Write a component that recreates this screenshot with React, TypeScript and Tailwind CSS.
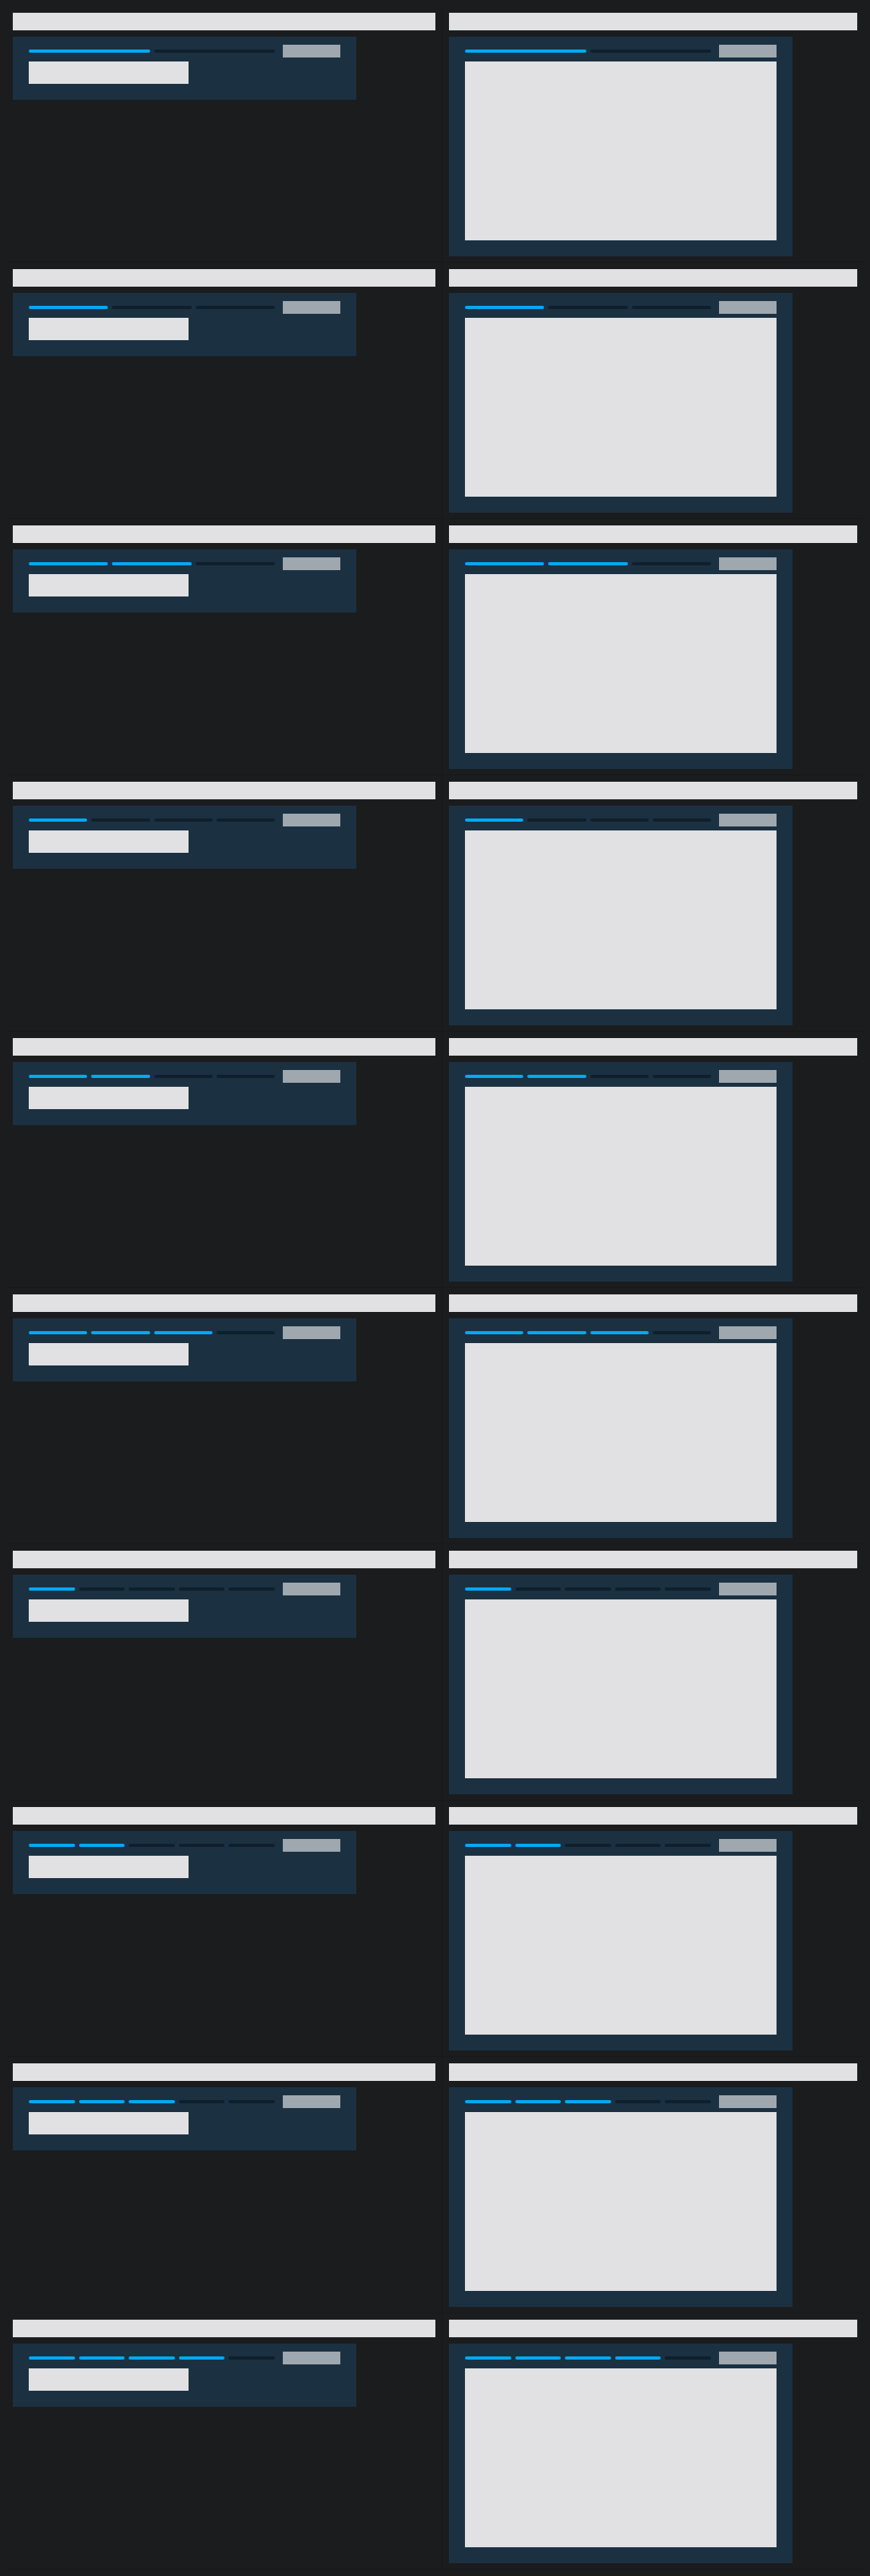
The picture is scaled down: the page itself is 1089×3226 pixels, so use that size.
import React from "react";

interface StepBarProps {
    total: number;
    done: number;
}

const StepBar: React.FC<StepBarProps> = ({ total, done }: StepBarProps) => {
    return (
        <div className="flex items-center gap-[10px]">
            <div className="flex flex-1 gap-[5px]">
                {Array.from({ length: total }).map((_, i) => (
                    <div
                        key={i}
                        className={i < done ? "h-1 flex-1 rounded-full bg-[#03a9f4]" : "h-1 flex-1 rounded-full bg-[#0f1f2b]"}
                    />
                ))}
            </div>
            <div className="h-4 w-[72px] bg-[#9ea8ae]" />
        </div>
    );
};

interface StepCardProps {
    total: number;
    done: number;
    tall?: boolean;
}

const StepCard: React.FC<StepCardProps> = ({ total, done, tall }: StepCardProps) => {
    return (
        <div className="w-[430px] bg-[#1b3142] px-5 pt-[10px] pb-5">
            <StepBar total={total} done={done} />
            {tall ? (
                <div className="mt-[5px] h-[224px] w-full bg-[#e1e1e3]" />
            ) : (
                <div className="mt-[5px] h-7 w-[200px] bg-[#e1e1e3]" />
            )}
        </div>
    );
};

const steps = [
    { total: 2, done: 1 },
    { total: 3, done: 1 },
    { total: 3, done: 2 },
    { total: 4, done: 1 },
    { total: 4, done: 2 },
    { total: 4, done: 3 },
    { total: 5, done: 1 },
    { total: 5, done: 2 },
    { total: 5, done: 3 },
    { total: 5, done: 4 },
];

export default function App() {
    return (
        <div className="min-h-[3226px] bg-[#1b1c1e] p-2">
            {steps.map((s, i) => (
                <div key={i} className="flex border-b border-[#17181a]">
                    <div className="w-[545px] px-2 pt-2 pb-[7px]">
                        <div className="h-[22px] bg-[#e1e1e3]" />
                        <div className="mt-2">
                            <StepCard total={s.total} done={s.done} />
                        </div>
                    </div>
                    <div className="w-[528px] border-l border-[#17181a] px-2 pt-2 pb-[7px]">
                        <div className="h-[22px] bg-[#e1e1e3]" />
                        <div className="mt-2">
                            <StepCard total={s.total} done={s.done} tall />
                        </div>
                    </div>
                </div>
            ))}
        </div>
    );
}
